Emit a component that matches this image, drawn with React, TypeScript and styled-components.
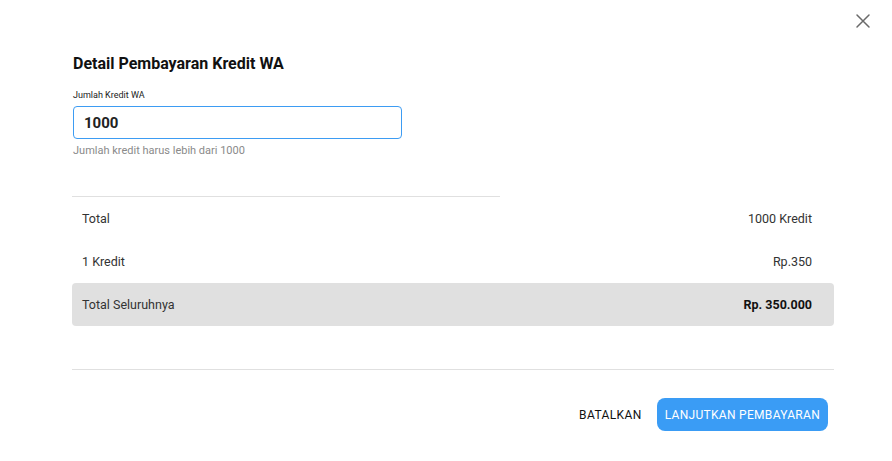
import styled, { createGlobalStyle } from "styled-components";

const GlobalStyle = createGlobalStyle`
  body {
    margin: 0;
    background: #ffffff;
    font-family: Roboto, "Liberation Sans", Arial, sans-serif;
    color: #222222;
  }
`;

const Dialog = styled.div`
  width: 892px;
  height: 461px;
  background: #ffffff;
  display: flex;
  flex-direction: column;
`;

const CloseRow = styled.div`
  display: flex;
  justify-content: flex-end;
  height: 42px;
  padding: 12px 20px 0 0;
  box-sizing: border-box;
`;

const CloseButton = styled.button`
  width: 18px;
  height: 18px;
  padding: 0;
  border: none;
  background: transparent;
  display: flex;
  align-items: center;
  justify-content: center;
  cursor: pointer;
`;

const Body = styled.div`
  padding: 0 58px 0 72px;
  display: flex;
  flex-direction: column;
`;

const Title = styled.h2`
  margin: 12px 0 0 1px;
  font-size: 16px;
  line-height: 20px;
  font-weight: 700;
  color: #111111;
`;

const Label = styled.label`
  margin: 16px 0 0 1px;
  font-size: 9px;
  line-height: 11px;
  color: #222222;
`;

const AmountInput = styled.input`
  margin: 5px 0 0 1px;
  width: 329px;
  height: 33px;
  box-sizing: border-box;
  border: 1px solid #3d9cf3;
  border-radius: 4px;
  padding: 0 10px;
  font-family: inherit;
  font-size: 15px;
  font-weight: 700;
  color: #222222;
  outline: none;
`;

const Helper = styled.div`
  margin: 5px 0 0 1px;
  font-size: 11px;
  line-height: 13px;
  color: #8a8a8a;
`;

const Divider = styled.div<{ $width?: string; $top: number }>`
  width: ${(p) => p.$width ?? "100%"};
  height: 1px;
  background: #e0e0e0;
  margin-top: ${(p) => p.$top}px;
`;

const Row = styled.div<{ $shaded?: boolean }>`
  height: 43px;
  display: flex;
  align-items: center;
  justify-content: space-between;
  padding: 0 22px 0 10px;
  font-size: 12.5px;
  color: #333333;
  border-radius: 4px;
  background: ${(p) => (p.$shaded ? "#e0e0e0" : "transparent")};
`;

const Value = styled.span<{ $bold?: boolean }>`
  font-weight: ${(p) => (p.$bold ? 700 : 400)};
  color: ${(p) => (p.$bold ? "#111111" : "#333333")};
`;

const Footer = styled.div`
  display: flex;
  justify-content: flex-end;
  align-items: center;
  gap: 7px;
  margin-top: 28px;
  padding-right: 6px;
`;

const TextButton = styled.button`
  height: 33px;
  padding: 0 8px;
  border: none;
  background: transparent;
  font-family: inherit;
  font-size: 12px;
  font-weight: 400;
  letter-spacing: 0.4px;
  color: #111111;
  cursor: pointer;
`;

const PrimaryButton = styled.button`
  height: 33px;
  padding: 0 8px;
  border: none;
  border-radius: 8px;
  background: #3a9cf5;
  font-family: inherit;
  font-size: 12px;
  font-weight: 400;
  letter-spacing: 0.3px;
  color: #ffffff;
  cursor: pointer;
`;

const rows = [
  { label: "Total", value: "1000 Kredit" },
  { label: "1 Kredit", value: "Rp.350" },
];

const App = () => {
  return (
    <Dialog>
      <GlobalStyle />
      <CloseRow>
        <CloseButton aria-label="close">
          <svg width="18" height="18" viewBox="0 0 18 18">
            <path
              d="M3 3 L15 15 M15 3 L3 15"
              stroke="#6a6a6a"
              strokeWidth="1.5"
              strokeLinecap="round"
            />
          </svg>
        </CloseButton>
      </CloseRow>
      <Body>
        <Title>Detail Pembayaran Kredit WA</Title>
        <Label>Jumlah Kredit WA</Label>
        <AmountInput defaultValue="1000" />
        <Helper>Jumlah kredit harus lebih dari 1000</Helper>
        <Divider $width="428px" $top={39} />
        {rows.map((r) => (
          <Row key={r.label}>
            <span>{r.label}</span>
            <Value>{r.value}</Value>
          </Row>
        ))}
        <Row $shaded>
          <span>Total Seluruhnya</span>
          <Value $bold>Rp. 350.000</Value>
        </Row>
        <Divider $top={43} />
        <Footer>
          <TextButton>BATALKAN</TextButton>
          <PrimaryButton>LANJUTKAN PEMBAYARAN</PrimaryButton>
        </Footer>
      </Body>
    </Dialog>
  );
};

export default App;
